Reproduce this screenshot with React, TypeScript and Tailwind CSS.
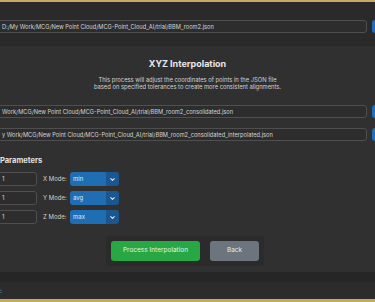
import { ChevronDown } from "lucide-react";

const font = { fontFamily: "Inter, 'Noto Sans', sans-serif" };

function PathRow({ value }: { value: string }) {
  return (
    <div className="flex items-center gap-[5px]">
      <div className="-ml-[6px] w-[373px] shrink-0 h-[13px] rounded-[3px] border border-[#4f4f4f] bg-[#2d2d2d] flex items-center pl-[7px] overflow-hidden">
        <span className="text-[5.7px] leading-none text-[#d4d4d4] whitespace-nowrap">{value}</span>
      </div>
      <div className="w-[30px] h-[13px] shrink-0 rounded-[3px] bg-[#1f6fb8]" />
    </div>
  );
}

function ModeRow({ axis, mode }: { axis: string; mode: string }) {
  return (
    <div className="flex items-center h-[14px]">
      <div className="-ml-[7px] w-[44px] h-[14px] shrink-0 rounded-[3px] border border-[#4f4f4f] bg-[#2d2d2d] flex items-center pl-[8px]">
        <span className="text-[6px] leading-none text-[#d4d4d4]">1</span>
      </div>
      <span className="ml-[6px] w-[27px] text-[6px] leading-none text-[#cfcfcf]">{axis} Mode:</span>
      <div className="flex h-[14px] w-[49px] rounded-[3px] overflow-hidden">
        <div className="flex-1 bg-[#1f6db3] flex items-center pl-[3px]">
          <span className="text-[6px] leading-none text-[#dfe9f5]">{mode}</span>
        </div>
        <div className="w-[13px] bg-[#1a5690] flex items-center justify-center">
          <ChevronDown className="w-[7px] h-[7px] text-[#e6eef8]" strokeWidth={3.5} />
        </div>
      </div>
    </div>
  );
}

export default function App() {
  return (
    <div className="w-[375px] h-[302px] overflow-hidden bg-[#2b2b2b] flex flex-col" style={font}>
      <div className="h-[2px] shrink-0 bg-[#c9a960]" />

      {/* source file */}
      <div className="h-[43px] shrink-0 bg-[#2a2a2a] pt-[18px]">
        <PathRow value="D:/My Work/MCG/New Point Cloud/MCG-Point_Cloud_AI/trial/BBM_room2.json" />
      </div>

      {/* interpolation panel */}
      <div className="h-[227px] shrink-0 bg-[#303030] border-t border-[#282828] flex flex-col">
        <h2 className="mt-[12px] text-center text-[9px] leading-[11px] font-bold text-[#e8e8e8]">
          XYZ Interpolation
        </h2>
        <p className="mt-[7px] text-center text-[5.8px] leading-[7px] text-[#d0d0d0]">
          This process will adjust the coordinates of points in the JSON file
          <br />
          based on specified tolerances to create more consistent alignments.
        </p>

        <div className="mt-[15px] flex flex-col gap-[10px]">
          <PathRow value="Work/MCG/New Point Cloud/MCG-Point_Cloud_AI/trial/BBM_room2_consolidated.json" />
          <PathRow value="y Work/MCG/New Point Cloud/MCG-Point_Cloud_AI/trial/BBM_room2_consolidated_interpolated.json" />
        </div>

        <h3 className="mt-[15px] text-[7.5px] leading-[9px] font-bold text-[#e2e2e2]">Parameters</h3>

        <div className="mt-[7px] flex flex-col gap-[5px]">
          <ModeRow axis="X" mode="min" />
          <ModeRow axis="Y" mode="avg" />
          <ModeRow axis="Z" mode="max" />
        </div>

        <div className="mt-[12px] self-center ml-[-5px] flex gap-[10px] bg-[#2b2b2b] rounded-[3px] px-[5px] py-[5px]">
          <button className="w-[89px] h-[20px] rounded-[3px] bg-[#27a844] text-[6.5px] text-[#e3f3e6]">
            Process Interpolation
          </button>
          <button className="w-[49px] h-[20px] rounded-[3px] bg-[#6c757d] text-[6.5px] text-[#e4e6e8]">
            Back
          </button>
        </div>
      </div>

      <div className="h-[10px] shrink-0 bg-[#262626]" />
      <div className="h-[17px] shrink-0 bg-[#2c2c2c] flex items-center">
        <span className="text-[6px] leading-none text-[#bdbdbd]">:</span>
      </div>
      <div className="h-[3px] shrink-0 bg-[#c9a960]" />
    </div>
  );
}
